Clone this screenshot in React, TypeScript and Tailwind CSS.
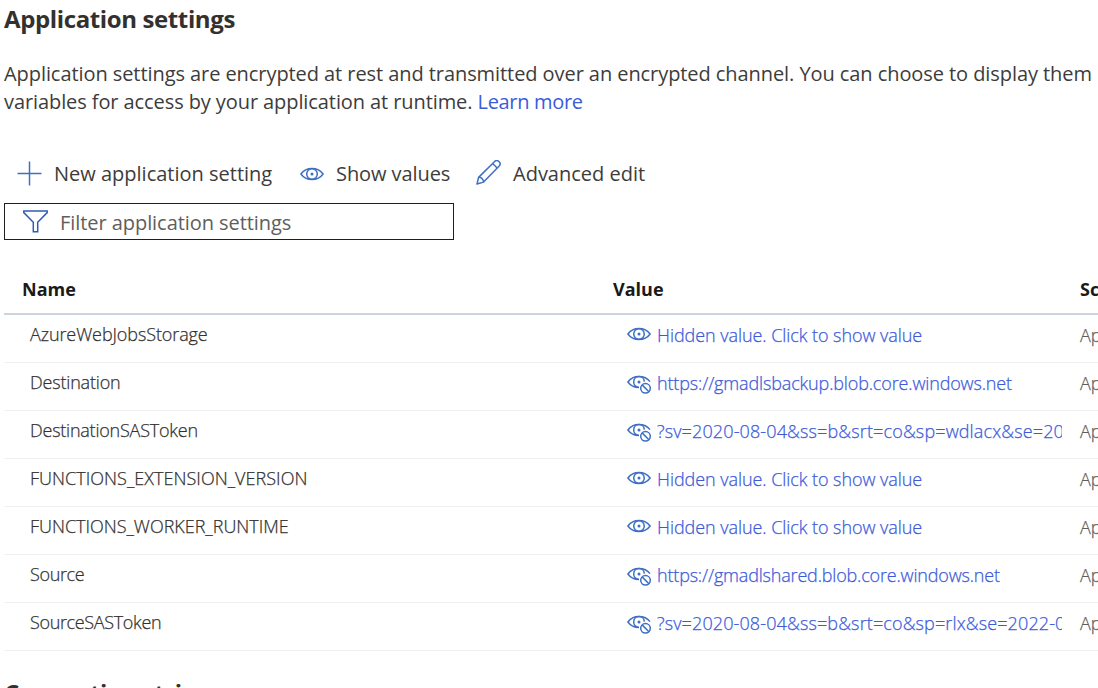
const ICON = "shrink-0 text-[#3f6fc4]";

function Plus() {
  return (
    <svg className={`${ICON} -mt-0.5`} width="25" height="25" viewBox="0 0 25 25" fill="none" stroke="currentColor" strokeWidth="1.5">
      <path d="M0.500 12.500h24M12.500 .5v24" />
    </svg>
  );
}

function Eye() {
  return (
    <svg className={ICON} width="24" height="20" viewBox="0 0 24 20" fill="none" stroke="currentColor" strokeWidth="1.5">
      <path d="M.9 10C3.4 6.500 7.300 4.500 12 4.500S20.600 6.500 23.100 10C20.600 13.500 16.700 15.500 12 15.500S3.400 13.500.9 10Z" />
      <circle cx="12" cy="10" r="5.300" />
      <circle cx="12" cy="10" r="1.500" fill="currentColor" stroke="none" />
    </svg>
  );
}

function EyeOff() {
  return (
    <svg className={ICON} width="24" height="22" viewBox="0 0 24 22" fill="none" stroke="currentColor" strokeWidth="1.5">
      <path d="M12 15.500C7.300 15.500 3.400 13.500.9 10C3.400 6.500 7.300 4.500 12 4.500S20.600 6.500 23 9.600" />
      <path d="M11.500 15.200A5.300 5.300 0 1 1 17.300 9.600" />
      <circle cx="12" cy="10" r="1.500" fill="currentColor" stroke="none" />
      <circle cx="18.500" cy="16.300" r="4.800" />
      <path d="M15.100 12.900l6.800 6.800" />
    </svg>
  );
}

function Pencil() {
  return (
    <svg className={`${ICON} -mt-[3px]`} width="25" height="25" viewBox="0 0 25 25" fill="none" stroke="currentColor" strokeWidth="1.5" strokeLinejoin="round">
      <path d="M1 24l1.600-6.600L18.400 1.700a2.900 2.900 0 0 1 4.800 4.300L7.600 22.100Z" />
      <path d="M2.600 17.400c2.400-.3 5.100 2 5 4.700M16.600 3.500l4.800 4.700" />
    </svg>
  );
}

function Funnel() {
  return (
    <svg className="shrink-0 text-[#2f5fb3]" width="25" height="23" viewBox="0 0 25 23" fill="none" stroke="currentColor" strokeWidth="1.5">
      <path d="M.8 1h23.400v1.600L14.700 12.200v9.600h-4.400v-9.600L.8 2.600Z" />
    </svg>
  );
}

type Setting = { name: string; nameClass: string; value: string; valueClass: string; shown?: boolean };

const HIDDEN = "Hidden value. Click to show value";

const SETTINGS: Setting[] = [
  { name: "AzureWebJobsStorage", nameClass: "tracking-[-0.1px]", value: HIDDEN, valueClass: "tracking-[-0.06px]" },
  { name: "Destination", nameClass: "tracking-[-0.18px]", value: "https://gmadlsbackup.blob.core.windows.net", valueClass: "tracking-[-0.15px]", shown: true },
  { name: "DestinationSASToken", nameClass: "tracking-[-0.23px]", value: "?sv=2020-08-04&ss=b&srt=co&sp=wdlacx&se=20", valueClass: "tracking-[0.13px]", shown: true },
  { name: "FUNCTIONS_EXTENSION_VERSION", nameClass: "tracking-[0.03px]", value: HIDDEN, valueClass: "tracking-[-0.06px]" },
  { name: "FUNCTIONS_WORKER_RUNTIME", nameClass: "tracking-[-0.02px]", value: HIDDEN, valueClass: "tracking-[-0.06px]" },
  { name: "Source", nameClass: "tracking-[-0.35px]", value: "https://gmadlshared.blob.core.windows.net", valueClass: "tracking-[-0.18px]", shown: true },
  { name: "SourceSASToken", nameClass: "tracking-[-0.35px]", value: "?sv=2020-08-04&ss=b&srt=co&sp=rlx&se=2022-0", valueClass: "tracking-[0.12px]", shown: true },
];

export default function App() {
  return (
    <main className="h-[688px] overflow-hidden whitespace-nowrap bg-white pl-1 font-['Open_Sans','Noto_Sans',sans-serif] text-[#323130]">
      <h1 className="pt-[3px] text-2xl leading-8 font-bold tracking-[-0.38px]">Application settings</h1>
      <p className="mt-[25px] text-xl leading-7 tracking-[-0.07px] text-[#3d3c3b]">
        Application settings are encrypted at rest and transmitted over an encrypted channel. You can choose to display them
        <br />
        <span className="tracking-[-0.09px]">variables for access by your application at runtime. </span>
        <a className="tracking-[-0.32px] text-[#3b5bdb]">Learn more</a>
      </p>

      <div className="mt-[43px] flex h-[30px] items-center pl-[13px] text-xl text-[#3d3c3b]">
        <button className="flex w-[283px] items-center gap-3"><Plus />New application setting</button>
        <button className="flex w-[176px] items-center gap-3 tracking-[-0.08px]"><Eye />Show values</button>
        <button className="flex items-center gap-3"><Pencil />Advanced edit</button>
      </div>

      <div className="mt-[14px] flex h-[37px] w-[450px] items-center gap-3 border border-[#201f1e] pl-[18px] text-xl tracking-[-0.06px] text-[#605e5c]">
        <Funnel />
        <span className="pt-0.5">Filter application settings</span>
      </div>

      <section className="mt-[25px] text-lg leading-6">
        <div className="grid h-[50px] grid-cols-[591px_467px_100px] items-center border-b-2 border-[#ccd5de] pl-[18px] font-bold text-[#1b1a19]">
          <span>Name</span>
          <span>Value</span>
          <span>Scope</span>
        </div>
        {SETTINGS.map((s) => (
          <div key={s.name} className="grid h-12 grid-cols-[597px_435px_18px_100px] border-b border-[#f0f0f0] pl-[26px] font-light [-webkit-text-stroke:0.25px_currentColor]">
            <span className={`pt-[7px] ${s.nameClass}`}>{s.name}</span>
            <a className="flex gap-1.5 pt-2 text-[#3b5bdb]">
              <span className="pt-px [-webkit-text-stroke:0px]">{s.shown ? <EyeOff /> : <Eye />}</span>
              <span className={`min-w-0 flex-1 overflow-hidden ${s.valueClass}`}>{s.value}</span>
            </a>
            <span />
            <span className="pt-2 text-[#605e5c]">App Service</span>
          </div>
        ))}
      </section>

      <h2 className="mt-[26px] text-2xl leading-8 font-bold tracking-[-0.38px]">Connection strings</h2>
    </main>
  );
}
